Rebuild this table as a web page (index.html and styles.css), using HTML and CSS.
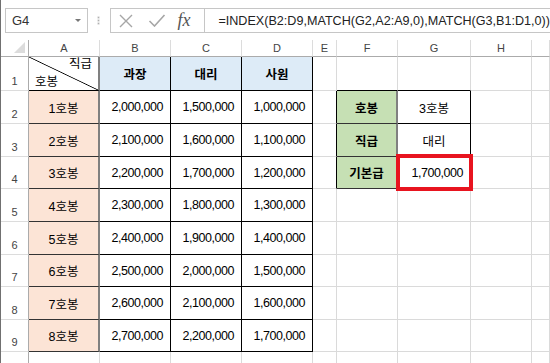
FILE: index.html
```html
<!DOCTYPE html>
<html lang="ko">
<head>
<meta charset="utf-8">
<link rel="stylesheet" href="styles.css">
</head>
<body>
<div class="app">
  <div class="fbar">
    <div class="namebox"><span>G4</span><span class="arrow"></span></div>
    <div class="dots"><i></i><i></i><i></i></div>
    <div class="fbox">
      <div class="icons">
        <svg class="ico-x" width="16" height="14" viewBox="0 0 16 14"><path d="M2 1 L14 13 M14 1 L2 13" stroke="#a6a6a6" stroke-width="1.4" fill="none"/></svg>
        <svg class="ico-ok" width="18" height="13" viewBox="0 0 18 13"><path d="M1.5 7 L6.5 12 L16.5 1" stroke="#a6a6a6" stroke-width="1.6" fill="none"/></svg>
        <span class="fx">fx</span>
      </div>
      <div class="ftext">=INDEX(B2:D9,MATCH(G2,A2:A9,0),MATCH(G3,B1:D1,0))</div>
    </div>
  </div>
  <div class="sheet">
    <div class="corner"><span></span></div>
    <div class="ch">A</div><div class="ch">B</div><div class="ch">C</div><div class="ch">D</div><div class="ch">E</div><div class="ch">F</div><div class="ch">G</div><div class="ch">H</div><div class="ch"></div>

    <div class="rh">1</div>
    <div class="c t diag lab0"><span class="dr">직급</span><span class="dl">호봉</span></div>
    <div class="c t hd">과장</div><div class="c t hd">대리</div><div class="c t hd">사원</div>
    <div class="c"></div><div class="c bb"></div><div class="c bb"></div><div class="c"></div><div class="c"></div>

    <div class="rh">2</div>
    <div class="c t lab">1호봉</div><div class="c t num">2,000,000</div><div class="c t num">1,500,000</div><div class="c t num">1,000,000</div>
    <div class="c br"></div><div class="c t g">호봉</div><div class="c t ctr">3호봉</div><div class="c"></div><div class="c"></div>

    <div class="rh">3</div>
    <div class="c t lab">2호봉</div><div class="c t num">2,100,000</div><div class="c t num">1,600,000</div><div class="c t num">1,100,000</div>
    <div class="c br"></div><div class="c t g">직급</div><div class="c t ctr">대리</div><div class="c"></div><div class="c"></div>

    <div class="rh">4</div>
    <div class="c t lab">3호봉</div><div class="c t num">2,200,000</div><div class="c t num">1,700,000</div><div class="c t num">1,200,000</div>
    <div class="c br"></div><div class="c t g">기본급</div><div class="c t num">1,700,000</div><div class="c"></div><div class="c"></div>

    <div class="rh">5</div>
    <div class="c t lab">4호봉</div><div class="c t num">2,300,000</div><div class="c t num">1,800,000</div><div class="c t num">1,300,000</div>
    <div class="c"></div><div class="c"></div><div class="c"></div><div class="c"></div><div class="c"></div>

    <div class="rh">6</div>
    <div class="c t lab">5호봉</div><div class="c t num">2,400,000</div><div class="c t num">1,900,000</div><div class="c t num">1,400,000</div>
    <div class="c"></div><div class="c"></div><div class="c"></div><div class="c"></div><div class="c"></div>

    <div class="rh">7</div>
    <div class="c t lab">6호봉</div><div class="c t num">2,500,000</div><div class="c t num">2,000,000</div><div class="c t num">1,500,000</div>
    <div class="c"></div><div class="c"></div><div class="c"></div><div class="c"></div><div class="c"></div>

    <div class="rh">8</div>
    <div class="c t lab">7호봉</div><div class="c t num">2,600,000</div><div class="c t num">2,100,000</div><div class="c t num">1,600,000</div>
    <div class="c"></div><div class="c"></div><div class="c"></div><div class="c"></div><div class="c"></div>

    <div class="rh">9</div>
    <div class="c t lab">8호봉</div><div class="c t num">2,700,000</div><div class="c t num">2,200,000</div><div class="c t num">1,700,000</div>
    <div class="c"></div><div class="c"></div><div class="c"></div><div class="c"></div><div class="c"></div>

    <div class="rh">10</div>
    <div class="c"></div><div class="c"></div><div class="c"></div><div class="c"></div>
    <div class="c"></div><div class="c"></div><div class="c"></div><div class="c"></div><div class="c"></div>
  </div>
  <div class="sel"></div>
</div>
</body>
</html>
```

FILE: styles.css
```css
* { box-sizing: border-box; }
body {
  margin: 0;
  width: 550px;
  height: 363px;
  overflow: hidden;
  background: #fff;
  font-family: "Liberation Sans", "Noto Sans CJK KR", sans-serif;
}
.app {
  position: relative;
  width: 550px;
  height: 363px;
  border-left: 1px solid #707070;
  overflow: hidden;
}

/* formula bar */
.fbar {
  height: 40px;
  display: flex;
  align-items: flex-start;
  padding: 8px 0 0 4px;
}
.namebox {
  width: 86px;
  height: 25px;
  border: 1px solid #c6c6c6;
  display: flex;
  align-items: center;
  justify-content: space-between;
  padding: 0 6px 0 6px;
  font-size: 13px;
  color: #333;
}
.arrow {
  width: 0;
  height: 0;
  border-left: 3px solid transparent;
  border-right: 3px solid transparent;
  border-top: 3px solid #777;
}
.dots {
  width: 24px;
  height: 25px;
  display: flex;
  flex-direction: column;
  align-items: center;
  justify-content: center;
  gap: 2px;
}
.dots i {
  width: 1px;
  height: 1px;
  background: #b0b0b0;
  box-shadow: 0 0 0 0.5px #c8c8c8;
}
.fbox {
  flex: 1;
  height: 25px;
  border: 1px solid #c6c6c6;
  border-right: none;
  display: flex;
  align-items: center;
}
.icons {
  width: 94px;
  height: 100%;
  border-right: 1px solid #c6c6c6;
  display: flex;
  align-items: center;
  padding-left: 7px;
}
.ico-x { margin-right: 14px; }
.ico-ok { margin-right: 11px; }
.fx {
  font-family: "Liberation Serif", serif;
  font-style: italic;
  font-size: 18px;
  color: #555;
  line-height: 1;
  margin-top: -2px;
}
.ftext {
  padding-left: 13px;
  font-size: 12.6px;
  color: #222;
  white-space: nowrap;
}

/* sheet grid */
.sheet {
  display: grid;
  grid-template-columns: 28px 71px 71px 71px 71px 24px 61px 73px 61px 1fr;
  grid-template-rows: 17px 34px 33px 33px 32px 33px 33px 32px 33px 32px 33px;
  font-size: 12.5px;
  color: #000;
}
.corner {
  border-right: 1px solid #ababab;
  border-bottom: 1px solid #ababab;
  display: flex;
  justify-content: flex-end;
  align-items: flex-end;
  padding: 0 3px 3px 0;
}
.corner span {
  width: 11px;
  height: 11px;
  background: #dcdcdc;
  clip-path: polygon(100% 0, 100% 100%, 0 100%);
}
.ch {
  border-right: 1px solid #dcdcdc;
  border-bottom: 1px solid #ababab;
  font-size: 11px;
  color: #444;
  display: flex;
  align-items: center;
  justify-content: center;
}
.rh {
  border-right: 1px solid #ababab;
  border-bottom: 1px solid #dcdcdc;
  font-size: 11px;
  color: #444;
  display: flex;
  align-items: flex-end;
  justify-content: center;
  padding-bottom: 3px;
}
.c {
  border-right: 1px solid #dadada;
  border-bottom: 1px solid #dadada;
  display: flex;
  align-items: center;
  white-space: nowrap;
}
.t {
  border-right-color: #000;
  border-bottom-color: #000;
}
.bb { border-bottom-color: #000; }
.br { border-right-color: #000; }
.lab {
  background: #fce4d6;
  justify-content: center;
  border-right: 2px solid #808080;
  border-bottom-color: #333;
}
.lab0 {
  border-right: 2px solid #808080;
}
.hd {
  background: #ddebf7;
  justify-content: center;
  font-weight: bold;
}
.num {
  justify-content: flex-end;
  padding-right: 7px;
  letter-spacing: -0.45px;
}
.ctr { justify-content: center; }
.g {
  background: #c6e0b4;
  justify-content: center;
  font-weight: bold;
  border-right: 2px solid #808080;
  border-bottom-color: #333;
}
.diag {
  flex-direction: column;
  align-items: stretch;
  justify-content: space-between;
  padding: 0 6px 0 6px;
  background: linear-gradient(to top right, transparent calc(50% - 0.8px), #000 50%, transparent calc(50% + 0.8px));
  line-height: 15px;
}
.dr { text-align: right; }
.dl { text-align: left; }

/* selection highlight */
.sel {
  position: absolute;
  left: 395px;
  top: 154px;
  width: 77px;
  height: 37px;
  border: 4px solid #e8141f;
}
```
